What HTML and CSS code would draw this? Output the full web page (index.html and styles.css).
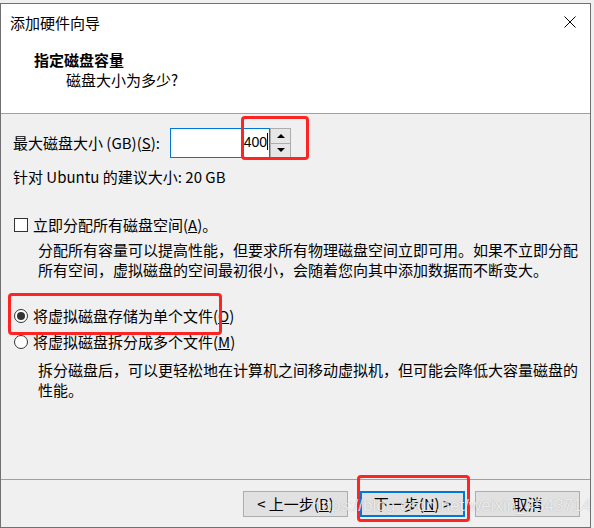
FILE: index.html
```html
<!DOCTYPE html>
<html lang="zh-CN">
<head>
  <meta charset="UTF-8">
  <title>添加硬件向导</title>
  <link rel="stylesheet" href="styles.css">
</head>
<body>

<div class="window">
  <div class="header">
    <div class="titlebar">
      <span class="title">添加硬件向导</span>
      <svg class="close" width="12" height="12" viewBox="0 0 12 12">
        <path d="M0.5 0.5 L11.5 11.5 M11.5 0.5 L0.5 11.5" stroke="#000" stroke-width="1"/>
      </svg>
    </div>
    <div class="heading">指定磁盘容量</div>
    <div class="subheading">磁盘大小为多少?</div>
  </div>

  <div class="content">
    <div class="size-row">
      <span class="label">最大磁盘大小 (GB)(<u>S</u>):</span>
      <div class="spin">
        <div class="spin-input">400<span class="caret"></span></div>
        <div class="spin-buttons">
          <div class="spin-btn"><span class="tri-up"></span></div>
          <div class="spin-btn"><span class="tri-down"></span></div>
        </div>
      </div>
    </div>
    <div class="hint">针对 Ubuntu 的建议大小: 20 GB</div>

    <div class="option first">
      <span class="checkbox"></span>
      <span>立即分配所有磁盘空间(<u>A</u>)。</span>
    </div>
    <p class="desc">分配所有容量可以提高性能，但要求所有物理磁盘空间立即可用。如果不立即分配所有空间，虚拟磁盘的空间最初很小，会随着您向其中添加数据而不断变大。</p>

    <div class="option radio-first">
      <span class="radio checked"></span>
      <span>将虚拟磁盘存储为单个文件(<u>O</u>)</span>
    </div>
    <div class="option radio-second">
      <span class="radio"></span>
      <span>将虚拟磁盘拆分成多个文件(<u>M</u>)</span>
    </div>
    <p class="desc">拆分磁盘后，可以更轻松地在计算机之间移动虚拟机，但可能会降低大容量磁盘的性能。</p>
  </div>

  <div class="footer">
    <button class="btn">&lt; 上一步(<u>B</u>)</button>
    <button class="btn default">下一步(<u>N</u>) &gt;</button>
    <button class="btn cancel">取消</button>
  </div>

  <div class="mark mark-size"></div>
  <div class="mark mark-single"></div>
  <div class="mark mark-next"></div>
  <div class="watermark">https://blog.csdn.net/weixin_45437140</div>
</div>

</body>
</html>
```

FILE: styles.css
```css
* {
  box-sizing: border-box;
}

body {
  margin: 0;
  background: #f0f0f0;
  font-family: "Noto Sans CJK SC", "Noto Sans", sans-serif;
  font-size: 15px;
  color: #000;
}

.window {
  position: relative;
  width: 591px;
  height: 525px;
  margin-top: 3px;
  border: 1px solid #707070;
  background: #f0f0f0;
  display: flex;
  flex-direction: column;
  overflow: hidden;
}

/* header */

.header {
  background: #fff;
  height: 110px;
  border-bottom: 1px solid #a0a0a0;
  padding-top: 9px;
}

.titlebar {
  display: flex;
  justify-content: space-between;
  align-items: center;
  height: 20px;
  padding: 0 14px 0 9px;
  line-height: 20px;
}

.close {
  display: block;
  margin-top: -2px;
}

.heading {
  margin-top: 17px;
  padding-left: 33px;
  line-height: 20px;
  font-weight: bold;
}

.subheading {
  padding-left: 65px;
  line-height: 20px;
}

/* body */

.content {
  flex: 1;
  padding-left: 12px;
  border-bottom: 1px solid #a0a0a0;
}

.size-row {
  display: flex;
  align-items: center;
  margin-top: 14px;
  height: 30px;
}

.label {
  width: 157px;
  line-height: 20px;
}

.spin {
  display: flex;
  height: 30px;
}

.spin-input {
  width: 100px;
  height: 30px;
  border: 1px solid #0078d7;
  background: #fff;
  text-align: right;
  line-height: 27px;
  padding-right: 1px;
  font-family: "Liberation Sans", sans-serif;
  font-size: 14px;
}

.caret {
  display: inline-block;
  width: 1px;
  height: 17px;
  background: #000;
  vertical-align: -3px;
}

.spin-buttons {
  display: flex;
  flex-direction: column;
  width: 21px;
  height: 30px;
  border: 1px solid #adadad;
  background: #e6e6e6;
}

.spin-btn {
  flex: 1;
  display: flex;
  align-items: center;
  justify-content: center;
}

.spin-btn + .spin-btn {
  border-top: 1px solid #adadad;
}

.tri-up {
  border-left: 4px solid transparent;
  border-right: 4px solid transparent;
  border-bottom: 4px solid #000;
}

.tri-down {
  border-left: 4px solid transparent;
  border-right: 4px solid transparent;
  border-top: 4px solid #000;
}

.hint {
  margin-top: 9px;
  line-height: 20px;
}

.option {
  display: flex;
  align-items: center;
  gap: 5px;
  line-height: 20px;
  padding-left: 1px;
}

.option.first {
  margin-top: 28px;
}

.option.radio-first {
  margin-top: 26px;
}

.option.radio-second {
  margin-top: 6px;
}

.checkbox {
  width: 14px;
  height: 14px;
  border: 1px solid #333;
  background: #fff;
}

.radio {
  width: 14px;
  height: 14px;
  border: 1px solid #333;
  border-radius: 50%;
  background: #fff;
  display: flex;
  align-items: center;
  justify-content: center;
}

.radio.checked::after {
  content: "";
  width: 8px;
  height: 8px;
  border-radius: 50%;
  background: #333;
}

.desc {
  margin: 5px 0 0;
  padding-left: 25px;
  width: 565px;
  line-height: 20px;
}

.radio-second + .desc {
  margin-top: 8px;
}

/* footer */

.footer {
  height: 47px;
  display: flex;
  justify-content: flex-end;
  align-items: flex-start;
  padding: 11px 10px 0 0;
}

.btn {
  width: 105px;
  height: 26px;
  border: 1px solid #adadad;
  background: #e1e1e1;
  font-family: "Noto Sans CJK SC", sans-serif;
  font-size: 15px;
  line-height: 20px;
  padding: 0;
  color: #000;
}

.btn.default {
  margin-left: 12px;
  border: 2px solid #0078d7;
}

.btn.cancel {
  margin-left: 10px;
}

/* annotations */

.mark {
  position: absolute;
  border: 3px solid #ff2424;
  border-radius: 4px;
}

.mark-size {
  left: 240px;
  top: 112px;
  width: 68px;
  height: 44px;
}

.mark-single {
  left: 7px;
  top: 289px;
  width: 214px;
  height: 42px;
}

.mark-next {
  left: 356px;
  top: 471px;
  width: 113px;
  height: 47px;
}

.watermark {
  position: absolute;
  left: 311px;
  top: 492px;
  font-family: "Liberation Sans", sans-serif;
  font-size: 17px;
  line-height: 20px;
  color: rgba(255, 255, 255, 0.8);
  text-shadow: 0 0 1px rgba(0, 0, 0, 0.3);
  white-space: nowrap;
}
```
